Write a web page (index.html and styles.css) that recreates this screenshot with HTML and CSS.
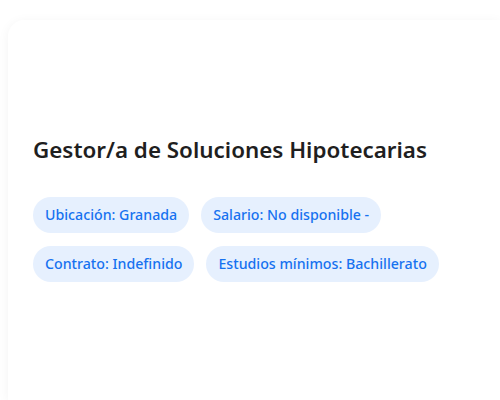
FILE: index.html
```html
<!DOCTYPE html>
<html lang="es">
<head>
<meta charset="utf-8">
<link rel="stylesheet" href="styles.css">
</head>
<body>
<div class="card">
  <h1 class="title">Gestor/a de Soluciones Hipotecarias</h1>
  <div class="chips">
    <span class="chip">Ubicación: Granada</span>
    <span class="chip">Salario: No disponible -</span>
    <span class="chip">Contrato: Indefinido</span>
    <span class="chip">Estudios mínimos: Bachillerato</span>
  </div>
</div>
</body>
</html>
```
FILE: styles.css
```css
html, body {
  margin: 0;
  background: #ffffff;
  overflow: hidden;
}
body {
  padding: 20px 0 0 8px;
  font-family: "Noto Sans", "Open Sans", sans-serif;
}
.card {
  width: 492px;
  height: 380px;
  box-sizing: border-box;
  background: #ffffff;
  border-radius: 16px 0 0 0;
  box-shadow: 0 2px 12px rgba(0, 0, 0, 0.05);
  padding: 115px 25px 0 25px;
}
.title {
  margin: 0 0 32px 0;
  font-size: 22.4px;
  font-weight: 600;
  color: #1f1f1f;
  line-height: 30px;
}
.chips {
  display: flex;
  flex-wrap: wrap;
  gap: 13px 12px;
  width: 420px;
}
.chip {
  display: inline-block;
  background: #e6f0fe;
  color: #1672f0;
  font-size: 14.2px;
  font-weight: 500;
  line-height: 36px;
  height: 36px;
  padding: 0 12px;
  border-radius: 18px;
}
```
